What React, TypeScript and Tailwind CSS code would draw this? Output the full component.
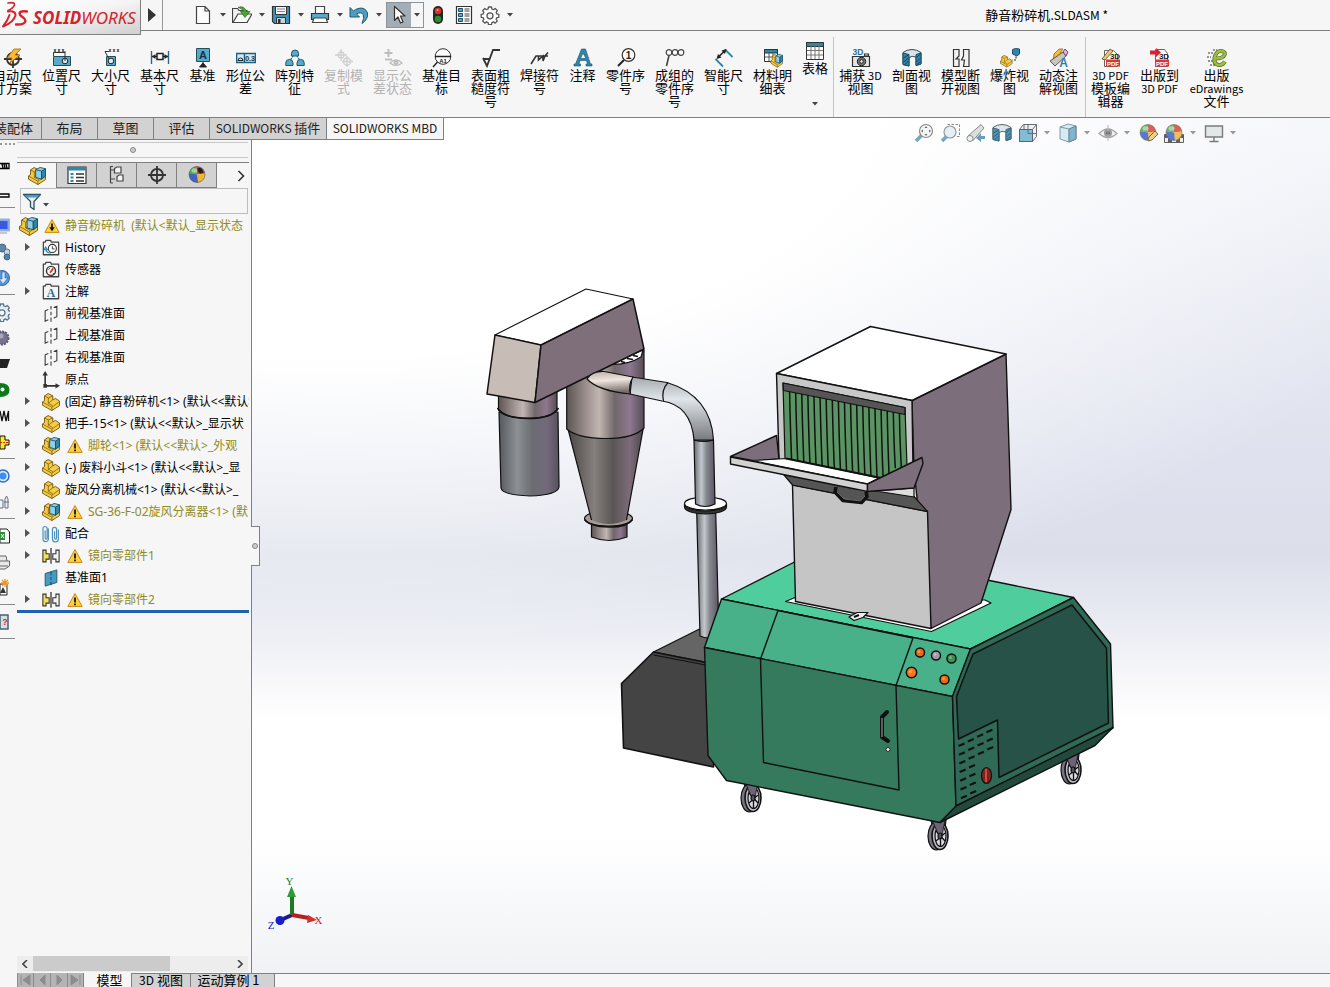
import React from "react";

type Glyph = React.ReactNode;

const INK = "#3a3a3a";
const BLUE = "#2f86ab";
const DARKBLUE = "#1d4f6b";
const LIGHT = "#8fd0e6";
const GOLD = "#f6cc45";

const blockBase = (
  <>
    <path d="M2.800 3.200 6.800.6 12 3.200v4.300L15 6l4.500 3v5L11 19.500.5 13.500V10l2.300-1.500Z" fill={GOLD} stroke="#6d5310" strokeLinejoin="round" />
    <path d="M.5 10 11 15.800l8.500-6.300M11 15.800v3.700M2.800 3.200 7 5.500l5-2.300M7 5.500v6l5 2.500M7 11.500l5-4" fill="none" stroke="#6d5310" strokeWidth=".8" />
  </>
);

const partShape = blockBase;

const assemblyShape = (
  <>
    {blockBase}
    <path d="m8.500 3 5-2.500 6 1.500v8L15 13.500l-6.500-2Z" fill={LIGHT} stroke={DARKBLUE} strokeLinejoin="round" />
    <path d="m15 4.500 4.500-2.500v8L15 13.500Z" fill={BLUE} stroke={DARKBLUE} strokeLinejoin="round" />
    <path d="m8.500 3 6.500 1.500v9" fill="none" stroke={DARKBLUE} />
  </>
);

const folderShape = (
  <path d="M1.500 17.500v-14h2l1-2h5l1 2h8v14Z" fill="#f4f4f4" stroke="#444" strokeWidth="1.400" strokeLinejoin="round" />
);

const planeShape = (
  <path d="M7 5 3.500 6.500V18L7 16.500M13 2.800l3.500-1.300V13L13 14.500M10 1v4m0 2.500v4m0 2.500v4.500" fill="none" stroke={INK} strokeWidth="1.200" />
);

const ball = (
  <>
    <path d="M10 9.500 2.200 8A8 8 0 0 1 9 1.500Z" fill="#4fae49" />
    <path d="M10 9.500 9 1.500a8 8 0 0 1 9 7Z" fill="#d9463c" />
    <path d="M10 9.500 18 8.500a8 8 0 0 1-7 9Z" fill="#f0b732" />
    <path d="M10 9.500 11 17.500A8 8 0 0 1 2.200 8Z" fill="#3f63c4" />
    <circle cx="10" cy="9.500" r="8" fill="none" stroke="#555" strokeWidth=".6" />
    <ellipse cx="7.500" cy="5.500" rx="3" ry="2.200" fill="#fff" opacity=".45" />
  </>
);

const gearShape = (color: string, fill: string) => (
  <>
    <path
      d="M8.500 2h3l.4 2 1.600.7 1.700-1.200 2.100 2.100-1.200 1.700.7 1.600 2 .4v3l-2 .4-.7 1.600 1.200 1.700-2.100 2.100-1.700-1.200-1.600.7-.4 2h-3l-.4-2-1.600-.7-1.700 1.200-2.100-2.100 1.200-1.700-.7-1.600-2-.4v-3l2-.4.7-1.600-1.200-1.700 2.100-2.100 1.700 1.200 1.600-.7Z"
      fill={fill}
      stroke={color}
      strokeWidth="1.300"
      strokeLinejoin="round"
    />
    <circle cx="10" cy="10.800" r="3" fill="#f6f6f6" stroke={color} strokeWidth="1.300" />
  </>
);

const sectionShape = (
  <>
    <path d="M1 4.500q4-3 9-3t9 3V16l-5 1.500V9q-4-1.500-7 .5v8.500L1 16.500Z" fill="#d6e6ec" stroke="#444" strokeLinejoin="round" />
    <path d="m1 5 6 1.500V18l-6-1.500ZM19 5l-5 1.500V17.500l5-1.500Z" fill={BLUE} stroke={DARKBLUE} />
    <path d="m1.500 10 5-3m-5 7 5-4m-4 7 4-4M14.500 9.500 18.500 6m-4 8 4-4m-3.500 6.500 3.500-3" stroke="#17394d" strokeWidth=".9" />
  </>
);

const miniText = (x: number, y: number, s: number, t: string, fill: string, anchor: "start" | "middle" = "middle") => (
  <text x={x} y={y} fontSize={s} fill={fill} textAnchor={anchor} fontWeight="700" className="font-['Liberation_Sans',sans-serif]">
    {t}
  </text>
);

const glyphs: Record<string, Glyph> = {
  autoDim: (
    <>
      <circle cx="10" cy="11" r="6" fill="none" stroke="#333" strokeWidth="1.800" />
      <path d="M10 3v17M1 11h18" stroke="#333" strokeWidth="1.800" />
      <path d="M11 1 4 10h5l-2 5 10-8h-5l6-6Z" fill="#ffb92e" stroke="#a2630c" strokeWidth=".8" />
    </>
  ),
  location: (
    <>
      <path d="M1.500 8.500h17v9h-17Z" fill="#58aac8" stroke="#244e60" />
      <circle cx="13" cy="13" r="2.800" fill="#d8eef5" stroke="#222" />
      <path d="M13 13V3M1.500 8V4.500H13" stroke="#333" fill="none" />
      <path d="m2 1 2 3m0-3L2 4m4-3 2 3m0-3L6 4m4-3 2 3m0-3-2 3" stroke="#222" strokeWidth=".8" />
    </>
  ),
  size: (
    <>
      <path d="M5.500 8.500h9v9h-9Z" fill="#58aac8" stroke="#244e60" />
      <circle cx="10" cy="13" r="2.800" fill="#d8eef5" stroke="#222" />
      <path d="M8 11 4 3.500h4" stroke="#333" fill="none" />
      <path d="m8 1 2 3m0-3L8 4m4-3 2 3m0-3-2 3m4-3 2 3m0-3-2 3" stroke="#222" strokeWidth=".8" />
    </>
  ),
  basic: (
    <>
      <path d="M1.500 3v13M18.500 3v13" stroke="#2a6a86" strokeWidth="1.400" />
      <path d="M2 8.500h5m6 0h5M7 5.500h6v6H7Z" fill="none" stroke="#222" strokeWidth="1.500" />
      <path d="m2 8.500 3.500-2.500v5ZM18 8.500 14.500 6v5Z" fill="#222" />
    </>
  ),
  datum: (
    <>
      <path d="M3.500.500h13v13h-13Z" fill="#58aac8" stroke="#244e60" />
      {miniText(10, 11, 11, "A", "#16323f")}
      <path d="M10 14v3M6.500 19h7L10 15Z" fill="#222" stroke="#222" />
    </>
  ),
  geoTol: (
    <>
      <path d="M.5 5.500h19v9H.5Z" fill="#cfe9f2" stroke="#1d5f7d" strokeWidth="1.600" />
      <path d="M8.500 5v10" stroke="#1d5f7d" strokeWidth="1.400" />
      <path d="M2 12.500h5a2.500 2.500 0 1 0-5 0Z" fill="none" stroke="#222" />
      {miniText(14, 13, 7, "0.3", "#16323f")}
    </>
  ),
  pattern: (
    <g fill="#58aac8" stroke="#1f5873">
      <path d="M6.500 8V5.500a3.500 3.500 0 0 1 7 0V8ZM.8 17.500V15a3.600 3.600 0 0 1 7.200 0v2.500ZM12 17.500V15a3.600 3.600 0 0 1 7.200 0v2.500Z" />
      <path d="m8 8-2.500 4M12 8l2.500 4" strokeWidth="1.200" strokeDasharray="1.500 1" />
    </g>
  ),
  copy: (
    <g fill="none" stroke="#cfcfcf" strokeWidth="1.300">
      <circle cx="7" cy="7" r="3" />
      <path d="M7 1v12M1 7h12M13 8v11M8 13.500h11" />
      <circle cx="13" cy="13.500" r="3.500" />
    </g>
  ),
  tolStatus: (
    <g fill="none" stroke="#bdbdbd" strokeWidth="2">
      <path d="M5.500 1v8M1.500 5h8M2 11.500h7" />
      <path d="M7 15q6-6 12 0-6 5-12 0Z" strokeWidth="1.200" />
      <circle cx="13" cy="14.500" r="1.500" />
    </g>
  ),
  datumTarget: (
    <>
      <circle cx="11" cy="8.500" r="7.800" fill="#fff" stroke="#333" />
      <path d="M3 8.500h16M5.500 14 1 19" stroke="#222" strokeWidth="1.400" />
      {miniText(11, 14.500, 6, "A1", "#222")}
    </>
  ),
  roughness: <path d="m2 10 4 8L12 2h7M2.500 11h6" fill="none" stroke="#333" strokeWidth="1.800" />,
  weld: <path d="m1 16 5-8h12M8.500 8v4L13 8v5l2-5 3-3.500" fill="none" stroke="#333" strokeWidth="1.600" />,
  note: (
    <path
      d="M8.500 1h4l5 15H19v2h-6v-2h1.500l-1-3.500H7L6 16h1.500v2H1v-2h1.500Zm1.500 4L7.500 10.500H13Z"
      fill={BLUE}
      stroke={DARKBLUE}
      strokeWidth=".6"
      fillRule="evenodd"
    />
  ),
  balloon: (
    <>
      <circle cx="12.500" cy="7" r="6.300" fill="#fff" stroke="#333" strokeWidth="1.200" />
      <path d="M8 12 2 18" stroke="#222" strokeWidth="2" />
      {miniText(12.500, 10.500, 10, "1", "#222")}
    </>
  ),
  stacked: (
    <g fill="#fff" stroke="#444" strokeWidth="1.200">
      <circle cx="4" cy="4.500" r="2.800" />
      <circle cx="10" cy="4.500" r="2.800" />
      <circle cx="16" cy="4.500" r="2.800" />
      <path d="M4 7.500 1.500 18" strokeWidth="1.600" />
    </g>
  ),
  smartDim: (
    <>
      <path d="M1.500 11 9 18.500M11 1.500 18.500 9" stroke={BLUE} strokeWidth="1.800" />
      <path d="m4 9.500 7-7" stroke="#222" strokeWidth="1.600" />
      <path d="M2.500 11 4 6l3.500 3.500ZM12.500 1 11 6 7.500 2.500Z" fill="#222" />
    </>
  ),
  bom: (
    <>
      <path d="M1.500 1.500h13v12h-13Z" fill="#fff" stroke="#333" />
      <path d="M1.500 1.500h13v3.500h-13Z" fill={BLUE} stroke="#333" />
      <path d="M2 9h12M6 5v8m4-8v8" stroke="#555" />
      <g transform="translate(7.500 6) scale(.62 .68)">{assemblyShape}</g>
    </>
  ),
  table: (
    <>
      <path d="M1.500 1.500h17v17h-17Z" fill="#fff" stroke="#333" />
      <path d="M1.500 1.500h17v4h-17Z" fill={BLUE} stroke="#333" />
      <path d="M2 9.500h16M2 14h16M6 5v13m4-13v13m4-13v13" stroke="#777" />
    </>
  ),
  capture: (
    <>
      {miniText(7, 7, 8.500, "3D", "#2f6f9b")}
      <path d="M1.500 8.500h17v10h-17ZM13.500 6h4v2h-4Z" fill="#e4e4e4" stroke="#333" strokeWidth="1.200" />
      <circle cx="10.500" cy="13.500" r="4.200" fill="#777" stroke="#222" />
      <circle cx="10.500" cy="13.500" r="1.800" fill="#eee" stroke="#222" />
    </>
  ),
  section: sectionShape,
  breakView: <path d="M2.500 1.500H8V8l-3 3h3v7.500H2.500ZM18 1.500h-5.500V8l-2 4h3l-1 6.500H18Z" fill="#f2f2f2" stroke="#333" strokeWidth="1.200" />,
  explode: (
    <>
      <g transform="translate(0 7) scale(.62)">{blockBase}</g>
      <path d="m12.500 1.500 3-1 4 .5v5L17 8l-4.500-2Z" fill={BLUE} stroke={DARKBLUE} />
      <path d="M16 8.500v3.500h-4" stroke="#222" strokeDasharray="2 1.500" fill="none" />
    </>
  ),
  dynamic: (
    <>
      <path d="m5 6 5-5h4l-3 4h3L4 13Z" fill="#ffb92e" stroke="#a2630c" strokeWidth=".8" />
      <path d="M1 13 14 4l3 4L6 18Z" fill="#c9c6c2" stroke="#555" />
      <path d="m14 4 2-3 3 3-2 4Z" fill="#d9b6e0" stroke="#6a4a74" />
      {miniText(14.500, 19, 12, "A", "#2f7fa5")}
    </>
  ),
  pdfEdit: (
    <>
      <path d="M3.500 2.500h9l4 4v12h-13Z" fill="#fff" stroke="#666" />
      {miniText(14, 10.500, 8, "3D", "#222")}
      <path d="M5 11.500h14v7H5Z" fill="#e0342d" />
      {miniText(12, 17.500, 6, "PDF", "#fff")}
      <path d="m1 11 8-10 3 2-8 9Z" fill="#f0c878" stroke="#5d4618" strokeWidth=".8" />
    </>
  ),
  pdfOut: (
    <>
      <path d="M5.500 1.500h9l3 4v13h-12Z" fill="#fff" stroke="#666" />
      {miniText(14, 10.500, 8, "3D", "#222")}
      <path d="M5 11.500h14v7H5Z" fill="#e0342d" />
      {miniText(12, 17.500, 6, "PDF", "#fff")}
      <path d="M0 2.500h6V0l5 4.500L6 9V6.500H0Z" fill="#d8232f" />
    </>
  ),
  eDrawings: (
    <>
      <path d="M1 5h5M0 9h4M1 13h5M3 17h6M6 2h4" stroke="#333" strokeDasharray="2 1" />
      <path d="M18 13.500q-2.500 4-6.500 3.500Q6.500 16 7.500 10 9 3 14 3q5 .5 3.500 4T8 10.500" fill="none" stroke="#5b7423" strokeWidth="4" />
      <path d="M18 13.500q-2.500 4-6.500 3.500Q6.500 16 7.500 10 9 3 14 3q5 .5 3.500 4T8 10.500" fill="none" stroke="#9dbd45" strokeWidth="2.400" />
    </>
  ),
  newDoc: <path d="M3.500 1.500h8.500l4.500 4.500v12.500h-13ZM12 1.500V6h4.500" fill="#fdfdfd" stroke="#444" strokeWidth="1.200" />,
  open: (
    <>
      <path d="M.5 17.500V3.500h5l1.500 2h8v12Z" fill="#f1f1f1" stroke="#444" strokeWidth="1.200" />
      <path d="M1 17.500 6 9h14l-5 8.500Z" fill="#fff" stroke="#444" strokeWidth="1.200" />
      <path d="M6 2.500q6-2.500 8.500 4H18l-5 6-4.500-6h3Q10 3 6 2.500Z" fill="#4aa832" stroke="#2a6b1b" strokeWidth=".7" />
    </>
  ),
  save: (
    <>
      <path d="M1.500 1.500h17v17H3.500l-2-2Z" fill="#3b93ba" stroke="#333" strokeWidth="1.200" />
      <path d="M4.500 1.500h11v8h-11Z" fill="#f4f4f4" stroke="#333" />
      <path d="M6 4h8M6 6.500h8" stroke="#888" />
      <path d="M5.500 12.500h9v6h-9Z" fill="#c9d3d8" stroke="#333" />
      <path d="M7 14h2.500v4H7Z" fill="#333" />
    </>
  ),
  print: (
    <>
      <path d="M5.500 1.500h9V9h-9Z" fill="#fff" stroke="#444" strokeWidth="1.200" />
      <path d="M1.500 8.500h17v6h-17Z" fill="#58aac8" stroke="#333" strokeWidth="1.200" />
      <path d="m4 13-1.500 4.500h15L16 13Z" fill="#fff" stroke="#444" strokeWidth="1.200" />
    </>
  ),
  undo: (
    <path
      d="M1 2.500V12h9.500L7.500 9Q12 6.500 14.200 9.500 15.500 13 13 18.500 19.500 14 18.500 8 16 1.500 9 3.500 6 4.500 4.500 6Z"
      fill="#4c9fc2"
      stroke="#235a74"
      strokeLinejoin="round"
    />
  ),
  cursor: <path d="M5.500 1.500v14l3.500-3.500 2.500 6 2.500-1-2.500-6h4.500Z" fill="#fff" stroke="#333" strokeWidth="1.200" strokeLinejoin="round" />,
  light: (
    <>
      <rect x="5" y="1" width="10" height="18" rx="5" fill="#26261f" />
      <circle cx="10" cy="6" r="3.300" fill="#d8322a" />
      <circle cx="10" cy="14" r="3.300" fill="#2f8a35" />
      <circle cx="9.500" cy="5" r="1" fill="#ffa69b" />
    </>
  ),
  props: (
    <>
      <path d="M2.500 1.500h15v17h-15Z" fill="#fff" stroke="#333" strokeWidth="1.200" />
      <path d="M4.500 3.500h4v3h-4Zm0 5h4v3h-4Zm0 5h4v3h-4Z" fill="#58aac8" stroke="#1d4f6b" />
      <path d="M10.500 4h5m-5 2h5m-5 3h5m-5 2h5m-5 3h5m-5 2h5" stroke="#444" />
    </>
  ),
  gear: gearShape("#555", "#fff"),
  part: partShape,
  assembly: assemblyShape,
  history: (
    <>
      {folderShape}
      <circle cx="11.500" cy="10.500" r="4.500" fill="#fff" stroke="#333" strokeWidth="1.200" />
      <path d="M11.500 8v3h2.500" stroke="#333" fill="none" />
      <path d="M4 11q1 5 6 4.500M4 9l-1.500 3H6Z" stroke={BLUE} fill="none" strokeWidth="1.200" />
    </>
  ),
  sensor: (
    <>
      {folderShape}
      <circle cx="10" cy="11" r="5" fill="#fff" stroke="#333" strokeWidth="1.600" />
      <path d="m9 13 3.500-5" stroke="#d8322a" strokeWidth="2" />
      <path d="M7 9.500 9 8m3 6h2" stroke="#333" />
    </>
  ),
  annot: (
    <>
      {folderShape}
      <text x="10" y="16" fontSize="13" textAnchor="middle" fill="#2a6f8f" fontWeight="700" className="font-['Liberation_Serif',serif]">A</text>
    </>
  ),
  plane: planeShape,
  origin: (
    <>
      <path d="M3.500 3v13.500H17" fill="none" stroke="#333" strokeWidth="1.800" />
      <path d="M3.500 0 6.500 5h-6ZM20 16.500l-5-3v6ZM1.500 14.500h4v4h-4Z" fill="#333" />
    </>
  ),
  mates: (
    <g fill="none" stroke="#4d91b8" strokeWidth="1.300">
      <path d="M3.500 6v8.500a1 1 0 0 0 2.200 0V4a2.300 2.300 0 0 0-4.600 0v11.500a3 3 0 0 0 6 0V4" />
      <path d="M14 7v7.500a1 1 0 0 0 2.200 0V5a2.300 2.300 0 0 0-4.600 0v10.500a3 3 0 0 0 6.600 0V5" />
    </g>
  ),
  mirror: (
    <>
      <path d="M1 3.500h3.500v4h3.500v6H4.500v3H1Z" fill="#f5e05a" stroke="#333" strokeWidth="1.200" />
      <path d="M19 3.500h-3.500v4H12v6h3.500v3H19Z" fill="#f4f4f4" stroke="#333" strokeWidth="1.200" />
      <path d="M10 1v17.500" stroke="#222" strokeWidth="1.300" />
    </>
  ),
  refPlane: (
    <>
      <path d="m3.500 5 13-4v14l-13 4Z" fill="#4a9abf" stroke="#24566e" />
      <path d="M10 3v4m0 2v3m0 2v4" stroke="#153a4c" />
    </>
  ),
  warn: (
    <>
      <path d="M10 2 19 18H1Z" fill="#fcd13b" stroke="#c98510" strokeWidth="1.200" strokeLinejoin="round" />
      <path d="M10 7v6m0 1.500v2" stroke="#111" strokeWidth="2.200" />
    </>
  ),
  warnDown: (
    <>
      <path d="M10 2 19 18H1Z" fill="#fcd13b" stroke="#c98510" strokeWidth="1.200" strokeLinejoin="round" />
      <path d="M10 7v6" stroke="#111" strokeWidth="2.200" />
      <path d="M6.500 11.500h7L10 16.500Z" fill="#111" />
    </>
  ),
  propList: (
    <>
      <path d="M1 2h18v16.500H1Z" fill="#fff" stroke="#333" strokeWidth="1.200" />
      <path d="M1 2h18v3.500H1Z" fill={BLUE} />
      <path d="M3.500 8h3v2h-3Zm0 3.500h3v2h-3Zm0 3.500h3v2h-3Z" fill={BLUE} />
      <path d="M9 9h8m-8 3.500h8M9 16h8" stroke="#333" strokeWidth="1.300" />
    </>
  ),
  config: (
    <g fill="#f4f4f4" stroke="#444" strokeWidth="1.200">
      <path d="M3.500 1v17M3.500 5H8m-4.500 9H8M3.500 1.500H6M3.500 18H6" />
      <path d="M7.500 3.500 10 2h4v6H7.500ZM10 11.500l2-1.500h4v6h-6Z" />
    </g>
  ),
  target: (
    <g fill="none" stroke="#333" strokeWidth="1.800">
      <circle cx="10" cy="10" r="6" />
      <path d="M10 1v18M1 10h18" />
    </g>
  ),
  appearance: (
    <>
      {ball}
      <path d="M10.500 3q5-1 6 5l-3.500.5Q10 7 10.500 3Z" fill="#222" />
    </>
  ),
  filter: (
    <>
      <path d="M1.500 3.500h17L12 10.500v8L8.500 16v-5.500Z" fill="#e8eef1" stroke="#2e5163" strokeWidth="1.300" strokeLinejoin="round" />
      <path d="M2.500 4h15l-2 2.500h-11Z" fill="#4a9abf" />
    </>
  ),
  zoomFit: (
    <>
      <path d="m8 12-6 6" stroke="#5e98b5" strokeWidth="3.500" />
      <circle cx="12" cy="8" r="6.500" fill="#f2f5f7" stroke="#777" strokeWidth="1.200" />
      <path d="m12 3 1.500 2h-3Zm0 10-1.500-2h3ZM7 8l2-1.500v3Zm10 0-2 1.500v-3Z" fill="#555" />
    </>
  ),
  zoomArea: (
    <>
      <path d="M7.500 1.500h12v12h-3" fill="none" stroke="#777" strokeDasharray="2.500 1.500" />
      <path d="m7 13-5 5" stroke="#5e98b5" strokeWidth="3.500" />
      <circle cx="10" cy="9" r="6" fill="#dfeef4" stroke="#888" strokeWidth="1.200" />
    </>
  ),
  prevView: (
    <>
      <path d="M2 13 15 1.500l3 3.500L6.500 18Z" fill="#d9d9d9" stroke="#777" />
      <circle cx="4" cy="15.500" r="3" fill="#eee" stroke="#777" />
      <path d="M19 13h-4v-3l-5 5 5 4v-3h4Z" fill="#4b8fb0" />
    </>
  ),
  orient: (
    <>
      <path d="m1.500 6.500 4-5h13v12l-4 5h-13Z" fill="#e9f1f5" stroke="#555" />
      <path d="M1.500 6.500h13v12h-13Z" fill="#6fb2cf" stroke="#446" />
      <path d="m14.500 6.500 4-5M10 1.500v9h8.500M6 6V1.500" fill="none" stroke="#555" />
    </>
  ),
  cube: (
    <>
      <path d="m2 4 8-3 8 2v13l-7 3-9-3Z" fill="#cfe9f2" stroke="#6b8996" />
      <path d="m11 6 7-3v13l-7 3Z" fill="#69abc8" stroke="#567" />
      <path d="m2 4 9 2v13" fill="none" stroke="#6b8996" />
    </>
  ),
  eye: (
    <>
      <path d="M1 10.500q9-9 18 0-9 8-18 0Z" fill="#eee" stroke="#999" strokeWidth="1.300" />
      <circle cx="10" cy="10" r="4" fill="#8b8b8b" />
      <circle cx="10" cy="10" r="1.800" fill="#333" />
      <path d="M10 2v16" stroke="#aaa" />
    </>
  ),
  ballEdit: (
    <>
      {ball}
      <path d="m10 18 1-4 6-6 3 3-6 6Z" fill="#f0c878" stroke="#6d5310" />
    </>
  ),
  scene: (
    <>
      <path d="M.5 11.500h19v8H.5Z" fill="#eee" stroke="#444" />
      <path d="M1 12h3v3H1Zm14 0h4v3h-4ZM4 15h4v4H4Zm8 0h4v4h-4Z" fill="#444" />
      {ball}
    </>
  ),
  monitor: (
    <>
      <path d="M1.500 3h17v11h-17Z" fill="#dfe4e7" stroke="#666" strokeWidth="1.400" />
      <path d="M10 14v4M5.500 18.500h9" stroke="#666" strokeWidth="1.500" />
    </>
  ),
};

const stripGlyphs: Record<string, Glyph> = {
  screw: <path d="M0 7.500h9v5H0M2 8l1 4m1-4 1 4m1-4 1 4" fill="none" stroke="#000" strokeWidth="1.300" />,
  tube: <path d="M0 8h9v3H0" fill="none" stroke="#000" strokeWidth="1.300" />,
  screen: (
    <>
      <path d="M0 3h9.500v12H0Z" fill="#8fa8f5" stroke="#9fb2c8" />
      <path d="M0 5h7.500v8H0Z" fill="#355be0" />
      <path d="M0 17h7" stroke="#999" />
    </>
  ),
  data: (
    <g stroke="#456" strokeWidth=".8">
      <circle cx="2" cy="6" r="4" fill="#5d86ad" />
      <circle cx="7" cy="10" r="3" fill="#bcd6ea" />
      <circle cx="7" cy="15" r="3" fill="#4b83b5" />
    </g>
  ),
  globe: (
    <>
      <circle cx="2" cy="10" r="7.500" fill="#5d95d8" stroke="#3566a4" />
      <path d="M2 4h3v6h3l-5 6-4-5h3Z" fill="#cfe8f8" stroke="#2b62b0" strokeWidth=".6" />
    </>
  ),
  gear: <g transform="translate(-8 0)">{gearShape("#5d748c", "#e6eef5")}</g>,
  cog: (
    <g>
      <circle cx="2" cy="10" r="6.500" fill="#77738f" stroke="#5a5672" strokeDasharray="2 1" strokeWidth="2" />
      <circle cx="1" cy="8" r="2.500" fill="#aaa7bd" />
    </g>
  ),
  black: <path d="M0 5h10l-3 9H0Z" fill="#222" />,
  clip: (
    <>
      <path d="M0 3q9.500 0 9.500 7T0 17Z" fill="#0b7a1b" />
      <circle cx="2.500" cy="9.500" r="2" fill="#fff" />
    </>
  ),
  spring: <path d="m0 5 2 10L4 5l2 10L8.500 5v10" fill="none" stroke="#111" strokeWidth="1.300" />,
  yellow: (
    <>
      <path d="M0 4h5v4h4v5H5v4H0Z" fill="#ffe92b" stroke="#111" />
      <path d="M0 10.500h9" stroke="#e02020" strokeDasharray="2 1" />
    </>
  ),
  disc: (
    <>
      <circle cx="3" cy="10" r="6" fill="#dceafd" stroke="#2d6fc4" strokeWidth="1.500" />
      <circle cx="3" cy="10" r="3.500" fill="#3f8df0" />
    </>
  ),
  stamp: <path d="M0 8h3v8H0M5 16V7l1.500-3L8 7v9ZM4 10h5" fill="#eef2f6" stroke="#64707c" />,
  sheet: (
    <>
      <path d="M0 3h7l2.500 3v11H0Z" fill="#fff" stroke="#222" />
      <path d="M0 6h5v8H0Z" fill="#2e8b3a" />
      <path d="m1 8 3 4m0-4-3 4" stroke="#fff" />
    </>
  ),
  printer: <path d="M0 4h6l1 5h2.500v5L5 17H0M0 9h7M0 14h8" fill="#e8e8e8" stroke="#666" />,
  picture: (
    <>
      <path d="M0 6h7v11H0Z" fill="#fff" stroke="#222" />
      <path d="M0 15 3 9l3 6Z" fill="#333" />
      <path d="M5 1v8M1 5h8M2 2l6 6m0-6L2 8" stroke="#f0962a" strokeWidth="1.300" />
    </>
  ),
  help: (
    <>
      <path d="M0 3h8v14H0Z" fill="#cfe0ea" stroke="#4a6172" strokeWidth="1.500" />
      {miniText(5, 13, 9, "?", "#d02a2a")}
    </>
  ),
};

function Icon({ name, className = "h-5 w-5" }: { name: string; className?: string }) {
  return (
    <svg viewBox="0 0 20 20" className={`block shrink-0 ${className}`} aria-hidden="true">
      {glyphs[name]}
    </svg>
  );
}

function Caret({ className = "text-[#444]" }: { className?: string }) {
  return (
    <svg viewBox="0 0 6 4" className={`block h-1 w-1.5 ${className}`} aria-hidden="true">
      <path d="M0 0h6L3 3.500Z" fill="currentColor" />
    </svg>
  );
}

/* Latin runs are set a little smaller than the Chinese characters beside them. */
function Mixed({ text, latin = "text-[12px]" }: { text: string; latin?: string }) {
  return (
    <>
      {text.split(/([\x21-\x7e][\x20-\x7e]*)/).map((part, i) =>
        i % 2 ? (
          <span key={i} className={latin}>
            {part}
          </span>
        ) : (
          part
        ),
      )}
    </>
  );
}

function QuickButton({ icon, label, menu = true }: { icon: string; label: string; menu?: boolean }) {
  return (
    <div className="flex items-center">
      <button aria-label={label}>
        <Icon name={icon} />
      </button>
      {menu && (
        <button aria-label={`${label} 选项`} className="flex h-5 w-[19px] items-center justify-center">
          <Caret />
        </button>
      )}
    </div>
  );
}

function TitleBar() {
  return (
    <header className="relative z-10 flex h-[31px] shrink-0 items-center border-b border-[#808080]">
      <div className="flex h-[35px] w-[141px] shrink-0 items-center gap-[5px] self-start border-r border-b border-[#808080] bg-linear-to-br from-white via-[#f4f4f4] to-[#cfcfcf]">
        <svg viewBox="0 0 28 28" className="-mt-1 h-7 w-7 shrink-0" aria-hidden="true">
          <g fill="none" stroke="#d4242b" strokeLinecap="round" strokeLinejoin="round">
            <path d="M8 2Q15 .8 14.500 4 13 7.500 8 9.500" strokeWidth="1.700" />
            <path d="M8 10.500Q16 9.500 15.500 14.500 13.500 21.500 3 25.500 7.500 20 9.500 14" strokeWidth="2" />
            <path d="M27 10.500q-7-1-7.500 2 0 1.500 3 3.500t3 4Q24.500 24 16 23.500" strokeWidth="2.400" />
          </g>
        </svg>
        <span className="pt-[2px] text-[17px] leading-5 text-[#d4242b] italic font-['Noto_Sans',sans-serif]">
          <b className="font-bold">SOLID</b>WORKS
        </span>
      </div>
      <button aria-label="展开菜单" className="flex h-full w-[22px] shrink-0 items-center justify-center border-r border-[#9a9a9a]">
        <svg viewBox="0 0 8 14" className="h-[14px] w-2" aria-hidden="true">
          <path d="m0 0 8 7-8 7Z" fill="#333" />
        </svg>
      </button>
      <div className="ml-[30px] flex items-center">
        <QuickButton icon="newDoc" label="新建" />
        <QuickButton icon="open" label="打开" />
        <QuickButton icon="save" label="保存" />
        <QuickButton icon="print" label="打印" />
        <QuickButton icon="undo" label="撤销" />
        <div className="-ml-0.5 mr-1 flex h-[26px] border border-[#8b949b]">
          <button aria-label="选择" className="flex w-6 items-center justify-center bg-[#a3adb5]">
            <Icon name="cursor" />
          </button>
          <button aria-label="选择 选项" className="flex w-3 items-center justify-center bg-[#f6f6f6]">
            <Caret />
          </button>
        </div>
        <div className="flex items-center gap-[6px]">
          <QuickButton icon="light" label="重建模型" menu={false} />
          <QuickButton icon="props" label="文件属性" menu={false} />
          <QuickButton icon="gear" label="选项" />
        </div>
      </div>
      <h1 className="mr-[222px] ml-auto text-[13px] leading-4 whitespace-nowrap text-black">
        <Mixed text="静音粉碎机.SLDASM *" />
      </h1>
    </header>
  );
}

type Tool = { icon: string; lines: string[]; width?: string; disabled?: boolean };

const dimensionTools: Tool[] = [
  { icon: "autoDim", lines: ["自动尺", "寸方案"] },
  { icon: "location", lines: ["位置尺", "寸"] },
  { icon: "size", lines: ["大小尺", "寸"] },
  { icon: "basic", lines: ["基本尺", "寸"] },
  { icon: "datum", lines: ["基准"], width: "w-[37px]" },
  { icon: "geoTol", lines: ["形位公", "差"] },
  { icon: "pattern", lines: ["阵列特", "征"] },
  { icon: "copy", lines: ["复制模", "式"], disabled: true },
  { icon: "tolStatus", lines: ["显示公", "差状态"], disabled: true },
  { icon: "datumTarget", lines: ["基准目", "标"] },
  { icon: "roughness", lines: ["表面粗", "糙度符", "号"] },
  { icon: "weld", lines: ["焊接符", "号"] },
  { icon: "note", lines: ["注释"], width: "w-[37px]" },
  { icon: "balloon", lines: ["零件序", "号"] },
  { icon: "stacked", lines: ["成组的", "零件序", "号"] },
  { icon: "smartDim", lines: ["智能尺", "寸"] },
  { icon: "bom", lines: ["材料明", "细表"] },
];

const viewTools: Tool[] = [
  { icon: "capture", lines: ["捕获 3D", "视图"], width: "w-[53px]" },
  { icon: "section", lines: ["剖面视", "图"] },
  { icon: "breakView", lines: ["模型断", "开视图"] },
  { icon: "explode", lines: ["爆炸视", "图"] },
  { icon: "dynamic", lines: ["动态注", "解视图"] },
];

const publishTools: Tool[] = [
  { icon: "pdfEdit", lines: ["3D PDF", "模板编", "辑器"] },
  { icon: "pdfOut", lines: ["出版到", "3D PDF"] },
  { icon: "eDrawings", lines: ["出版", "eDrawings", "文件"], width: "w-[65px]" },
];

function RibbonButton({ icon, lines, width = "w-[49px]", disabled }: Tool) {
  return (
    <button disabled={disabled} className={`flex shrink-0 flex-col items-center pt-[17px] ${width} ${disabled ? "text-[#b4b4b4]" : "text-black"}`}>
      <Icon name={icon} />
      {lines.map((line) => (
        <span key={line} className="h-[13px] text-[13px] leading-[13px] whitespace-nowrap">
          <Mixed text={line} latin="text-[11px]" />
        </span>
      ))}
    </button>
  );
}

function Ribbon() {
  return (
    <div className="flex h-[86px] shrink-0 overflow-hidden">
      <div className="-ml-3 flex">
        {dimensionTools.map((t) => (
          <RibbonButton key={t.icon} {...t} />
        ))}
        <button className="flex w-[36px] flex-col items-center pt-[10px] pb-[11px] text-black">
          <Icon name="table" />
          <span className="text-[13px] leading-[13px]">表格</span>
          <span className="mt-auto">
            <Caret />
          </span>
        </button>
      </div>
      <div className="mt-[6px] w-px bg-[#c4c4c4]" />
      <div className="flex">
        {viewTools.map((t) => (
          <RibbonButton key={t.icon} {...t} />
        ))}
      </div>
      <div className="mt-[6px] ml-[2px] w-px bg-[#c4c4c4]" />
      <div className="flex">
        {publishTools.map((t) => (
          <RibbonButton key={t.icon} {...t} />
        ))}
      </div>
    </div>
  );
}

const commandTabs = [
  { label: "装配体", width: "w-[42px]" },
  { label: "布局", width: "w-14" },
  { label: "草图", width: "w-14" },
  { label: "评估", width: "w-14" },
  { label: "SOLIDWORKS 插件", width: "w-[117px]" },
  { label: "SOLIDWORKS MBD", width: "w-[117px]", active: true },
];

function CommandTabs() {
  return (
    <nav className="flex h-[22px] w-fit border-b border-[#808080] bg-[#f6f6f6]">
      {commandTabs.map((t, i) => (
        <button
          key={t.label}
          className={`flex shrink-0 items-center overflow-hidden border-r border-[#808080] pb-[2px] text-[13px] leading-4 whitespace-nowrap text-[#222] ${t.width} ${
            i === 0 ? "justify-end pr-2" : "justify-center"
          } ${t.active ? "bg-[#f6f6f6]" : "bg-[#d2d2d2]"}`}
        >
          <span className="shrink-0">
            <Mixed text={t.label} />
          </span>
        </button>
      ))}
    </nav>
  );
}

const hudTools: { icon: string; label: string; menu?: boolean }[] = [
  { icon: "zoomFit", label: "整屏显示全图" },
  { icon: "zoomArea", label: "局部放大" },
  { icon: "prevView", label: "上一视图" },
  { icon: "section", label: "剖面视图" },
  { icon: "orient", label: "视图定向", menu: true },
  { icon: "cube", label: "显示样式", menu: true },
  { icon: "eye", label: "隐藏所有类型", menu: true },
  { icon: "ballEdit", label: "编辑外观" },
  { icon: "scene", label: "应用布景", menu: true },
  { icon: "monitor", label: "视图设置", menu: true },
];

function HeadsUpBar() {
  return (
    <div className="absolute top-1 right-[89px] flex items-center opacity-85">
      {hudTools.map((t) => (
        <React.Fragment key={t.icon}>
          <button aria-label={t.label} className="flex h-[22px] w-[26px] items-center justify-center">
            <Icon name={t.icon} />
          </button>
          {t.menu && (
            <button aria-label={`${t.label} 选项`} className="flex h-[22px] w-[14px] items-center pl-[3px]">
              <Caret className="text-[#888]" />
            </button>
          )}
        </React.Fragment>
      ))}
    </div>
  );
}

const stripItems = [
  "screen", "data", "globe", "-", "gear", "cog", "black", "clip", "spring", "yellow", "-",
  "disc", "stamp", "-", "sheet", "printer", "picture", "-", "help", "-",
];

function StripIcon({ name }: { name: string }) {
  return (
    <button aria-label={name} className="block h-5 w-[10px]">
      <svg viewBox="0 0 10 20" className="block h-5 w-[10px]" aria-hidden="true">
        {stripGlyphs[name]}
      </svg>
    </button>
  );
}

function SideStrip() {
  return (
    <div className="w-[17px] shrink-0 bg-[#f6f6f6]">
      <div className="mt-[3px] w-[15px] border-t-2 border-dotted border-[#999]" />
      <div className="mt-[11px] flex flex-col gap-[10px]">
        <StripIcon name="screw" />
        <StripIcon name="tube" />
      </div>
      <div className="mt-[1px] mb-2 w-[15px] border-t border-[#8a8a8a]" />
      <div className="flex flex-col gap-[6px]">
        {stripItems.map((n, i) =>
          n === "-" ? <div key={i} className="h-[2px] w-[15px] border-t border-[#8a8a8a]" /> : <StripIcon key={i} name={n} />,
        )}
      </div>
    </div>
  );
}

type Node = { icon: string; text: string; arrow?: boolean; warn?: boolean };

const nodes: Node[] = [
  { icon: "history", text: "History", arrow: true },
  { icon: "sensor", text: "传感器" },
  { icon: "annot", text: "注解", arrow: true },
  { icon: "plane", text: "前视基准面" },
  { icon: "plane", text: "上视基准面" },
  { icon: "plane", text: "右视基准面" },
  { icon: "origin", text: "原点" },
  { icon: "part", text: "(固定) 静音粉碎机<1> (默认<<默认>", arrow: true },
  { icon: "part", text: "把手-15<1> (默认<<默认>_显示状", arrow: true },
  { icon: "assembly", text: "脚轮<1> (默认<<默认>_外观", arrow: true, warn: true },
  { icon: "part", text: "(-) 废料小斗<1> (默认<<默认>_显", arrow: true },
  { icon: "part", text: "旋风分离机械<1> (默认<<默认>_", arrow: true },
  { icon: "assembly", text: "SG-36-F-02旋风分离器<1> (默", arrow: true, warn: true },
  { icon: "mates", text: "配合", arrow: true },
  { icon: "mirror", text: "镜向零部件1", arrow: true, warn: true },
  { icon: "refPlane", text: "基准面1" },
  { icon: "mirror", text: "镜向零部件2", arrow: true, warn: true },
];

const OLIVE = "text-[#8f8b1c]";

function FeatureTree() {
  return (
    <ul className="mr-[2px] overflow-hidden border-b-[3px] border-[#1f63b0] text-[12px] leading-5 font-['Noto_Sans','Noto_Sans_CJK_SC',sans-serif]">
      <li className={`mr-[2px] flex h-[22px] items-center overflow-hidden pt-[2px] pl-[2px] ${OLIVE}`}>
        <Icon name="assembly" className="h-[19px] w-[19px]" />
        <Icon name="warnDown" className="ml-1.5 h-4 w-4" />
        <span className="ml-[5px] whitespace-pre">静音粉碎机  (默认&lt;默认_显示状态</span>
      </li>
      {nodes.map((n) => (
        <li key={n.text} className={`flex h-[22px] items-center pt-[2px] pl-2 ${n.warn ? OLIVE : "text-black"}`}>
          <span className="h-[11px] w-[17px] shrink-0">
            {n.arrow && (
              <svg viewBox="0 0 5 8" className="h-2 w-[5px]" aria-hidden="true">
                <path d="m0 0 5 4-5 4Z" fill="#555" />
              </svg>
            )}
          </span>
          <Icon name={n.icon} className="h-[18px] w-[18px]" />
          {n.warn && <Icon name="warn" className="ml-[7px] h-4 w-4" />}
          <span className="ml-[5px] whitespace-nowrap">{n.text}</span>
        </li>
      ))}
    </ul>
  );
}

function FeaturePanel() {
  return (
    <aside className="relative flex w-[235px] shrink-0 flex-col border-r border-[#808080] bg-[#f6f6f6]">
      <div className="mt-[2px] mr-[3px] flex h-4 items-center justify-center border-y border-[#c8c8c8]">
        <span className="h-[6px] w-[6px] rounded-full border border-[#888] bg-[#ccc]" />
      </div>
      <div className="mt-1 mr-[2px] flex h-[26px] border-t border-[#808080]">
        <button aria-label="特征树" className="flex w-[39px] items-center justify-center">
          <Icon name="assembly" className="h-[18px] w-[18px]" />
        </button>
        {["propList", "config", "target", "appearance"].map((n) => (
          <button key={n} aria-label={n} className="flex w-10 items-center justify-center border-b border-l border-[#808080] bg-[#d2d2d2]">
            <Icon name={n} />
          </button>
        ))}
        <div className="flex flex-1 items-center justify-end border-l border-[#808080] bg-[#f6f6f6] pr-1">
          <svg viewBox="0 0 8 12" className="h-3 w-2" aria-hidden="true">
            <path d="m1.500 1 5 5-5 5" fill="none" stroke="#333" strokeWidth="1.600" />
          </svg>
        </div>
      </div>
      <div className="mx-[3px] flex h-[26px] items-center border border-[#bdbdbd] pl-px">
        <button aria-label="过滤器" className="flex items-end gap-px">
          <Icon name="filter" />
          <Caret className="mb-1 text-[#444]" />
        </button>
        <input aria-label="过滤特征树" className="min-w-0 flex-1 bg-transparent text-[12px] outline-none" />
      </div>
      <FeatureTree />
      <div className="mt-auto mr-[3px] mb-px flex h-4 items-center bg-[#ededed]">
        <button aria-label="向左滚动" className="flex w-4 justify-center">
          <svg viewBox="0 0 6 8" className="h-2 w-1.5" aria-hidden="true">
            <path d="M5 0 1 4l4 4" fill="none" stroke="#444" strokeWidth="1.600" />
          </svg>
        </button>
        <div className="h-full flex-1">
          <div className="h-[15px] w-[69%] bg-[#cbcbcb]" />
        </div>
        <button aria-label="向右滚动" className="flex w-4 justify-center">
          <svg viewBox="0 0 6 8" className="h-2 w-1.5" aria-hidden="true">
            <path d="m1 0 4 4-4 4" fill="none" stroke="#444" strokeWidth="1.600" />
          </svg>
        </button>
      </div>
      <button
        aria-label="折叠面板"
        className="absolute top-[386px] -right-[9px] flex h-10 w-[9px] items-center justify-center border border-l-0 border-[#808080] bg-[#f6f6f6]"
      >
        <span className="h-[6px] w-[6px] rounded-full border border-[#888] bg-[#ccc]" />
      </button>
    </aside>
  );
}

function Caster({ x, y }: { x: number; y: number }) {
  return (
    <g transform={`translate(${x} ${y})`} stroke="#111">
      <path d="M-7-16H8L6 0-3 2Z" fill="#7c7184" />
      <ellipse cx="-1.500" rx="8.500" ry="14" fill="#77737f" />
      <ellipse cx="2" rx="8" ry="13.500" fill="#bdbdc8" strokeWidth="1.600" />
      <ellipse cx="2.500" rx="5.500" ry="10.500" fill="#d9d9e2" />
      <path d="M2.500-2v12M-2 5 7-3M-2-5 7 5" strokeWidth="1.300" />
      <path d="M-6-16H7L4 0H1Z" fill="#6e6478" strokeWidth=".8" />
      <ellipse cx="2" rx="2" ry="3" fill="#555" />
    </g>
  );
}

const slats = Array.from({ length: 19 }, (_, i) => i + 1);
const vents = [4, 4, 4, 2, 2, 2, 2].flatMap((count, row) => Array.from({ length: count }, (_, col) => ({ row, col })));

const lamps = [
  { x: 920, y: 652.5, r: 4.5, fill: "#ee6a10" },
  { x: 936, y: 655.5, r: 4.5, fill: "#a39aa3" },
  { x: 951.5, y: 658.5, r: 4.5, fill: "#3f8f50" },
  { x: 911.5, y: 672.5, r: 5.2, fill: "#ff7612" },
  { x: 944.5, y: 679.5, r: 4.5, fill: "#ee6a10" },
];

function ModelView() {
  return (
    <svg viewBox="252 140 1078 833" className="block h-full w-full" role="img" aria-label="静音粉碎机模型">
      <defs>
        <linearGradient id="steel">
          <stop offset="0" stopColor="#5d5552" />
          <stop offset=".3" stopColor="#a69b98" />
          <stop offset=".42" stopColor="#c2b6b1" />
          <stop offset=".62" stopColor="#70686a" />
          <stop offset=".82" stopColor="#8f7790" />
          <stop offset="1" stopColor="#564c55" />
        </linearGradient>
        <linearGradient id="cone">
          <stop offset="0" stopColor="#4b4745" />
          <stop offset=".35" stopColor="#85807d" />
          <stop offset=".6" stopColor="#5a5554" />
          <stop offset=".82" stopColor="#7d6c7b" />
          <stop offset="1" stopColor="#4b454a" />
        </linearGradient>
        <linearGradient id="duct">
          <stop offset="0" stopColor="#55585c" />
          <stop offset=".3" stopColor="#8d9195" />
          <stop offset=".55" stopColor="#6a6d71" />
          <stop offset=".8" stopColor="#74697c" />
          <stop offset="1" stopColor="#56525c" />
        </linearGradient>
        <linearGradient id="pipe">
          <stop offset="0" stopColor="#666a70" />
          <stop offset=".35" stopColor="#c3c8cd" />
          <stop offset=".6" stopColor="#83878d" />
          <stop offset="1" stopColor="#5c5164" />
        </linearGradient>
        <linearGradient id="elbow" x1="0" y1="0" x2="0" y2="1">
          <stop offset="0" stopColor="#a5aaae" />
          <stop offset=".35" stopColor="#dfe5e8" />
          <stop offset="1" stopColor="#777a80" />
        </linearGradient>
        <linearGradient id="inlet" x1="0" y1="0" x2=".15" y2="1">
          <stop offset="0" stopColor="#b9aea8" />
          <stop offset=".45" stopColor="#f0e6df" />
          <stop offset="1" stopColor="#746b69" />
        </linearGradient>
      </defs>

      <g stroke="#111" strokeWidth="1.200" strokeLinejoin="round">
        {/* dust bin duct */}
        <path d="M499 412 501 488Q502 495 530 496 558 495 559 487L558 412Z" fill="url(#duct)" />
        <path d="M498.500 395V410Q505 418 528 418 551 418 557 410V385Z" fill="url(#steel)" />
        <path d="M497.500 408Q504 418.500 528 418.500T558.500 408" fill="none" strokeWidth="1.600" />

        {/* cyclone */}
        <path d="M591.500 522V537Q609 544 627 537V522Z" fill="url(#steel)" />
        <ellipse cx="608.500" cy="518.500" rx="24" ry="7.500" fill="#a79c95" />
        <path d="M568 429 591.500 520Q609 528 626.500 520L643.500 427Z" fill="url(#cone)" stroke="none" />
        <path d="M568 429 591.500 520M626.500 520 643.500 427" />
        <path d="M584.500 519.500Q590 526.500 608.500 527T632.500 519.500" fill="none" strokeWidth="1.600" />
        <path d="M566.700 375V429Q578 438.500 606 438.500T644 428V350H600Z" fill="url(#steel)" />
        <path d="M613 364.500 626 357.500 643 350 641 357Q630 364 613 364.500Z" fill="#fff" />
        <path d="m621 361.500 4 1m2-4 6 1m0-4 5 1" strokeWidth="1.600" />

        {/* fan housing */}
        <path d="m653.500 652 46-23 22 6v30l-16-3Z" fill="#656565" />
        <path d="m621.500 683.500 32-31.500 60 12v103l-90-19Z" fill="#444" strokeWidth="1.600" />
        <path d="m653.500 655 52 10" />

        {/* pipe run */}
        <path d="M696.500 505 700 636Q708 640 719 636L715.500 505Z" fill="url(#pipe)" />
        <path d="M684.500 504a21 7 0 0 0 42 0v3a21 7 0 0 1-42 0Z" fill="#333" />
        <ellipse cx="705.500" cy="503.500" rx="21" ry="6.500" fill="#fff" />
        <path d="M694 440 695.500 504Q705 509 715 504L713.500 440Z" fill="url(#pipe)" />
        <path d="M632 377 667 382.500Q711 396 713.500 440H694Q691 405 662 401L630 394Z" fill="url(#elbow)" />
        <path d="M668 382.500Q661 390 663.500 401M694 440q10 3 19.500 0" fill="none" />

        {/* blower head */}
        <path d="m495 335 91-46 47 10-92 46Z" fill="#fff" />
        <path d="m495 335 46 10-6 57.500-48-8.500Z" fill="#c8bdb6" strokeWidth="1.500" />
        <path d="m541 345 92-46 11 50-109 53.500Z" fill="#7f6f7a" strokeWidth="1.500" />
        <path d="M587 379Q592 371 604 371.500L633 377Q628 385 630.500 394 598 391 587 379Z" fill="url(#inlet)" />

        <Caster x={751} y={798} />
        <Caster x={938} y={836} />
        <Caster x={1071} y={770} />

        {/* cabinet */}
        <path d="m721.500 599 73-37 195 18.500 84 17L970.500 649Z" fill="#50cd9d" strokeWidth="1.400" />
        <path d="m721.500 599 249 50-18 47.500-248-49Z" fill="#49b189" strokeWidth="1.400" />
        <path d="m704.500 647.500 248 49 3.500 110-16 16-213.500-42-18.500-25Z" fill="#367a5d" strokeWidth="1.400" />
        <path d="m970.500 649 103-51.500 37 46.500 2.500 84-157 78-3.500-109.500Z" fill="#2f6a56" strokeWidth="1.400" />
        <path d="m956 806 157-78.500-18 18-155 77Z" fill="#214a3d" strokeWidth="1.400" />
        <path d="M973 654 1072 605 1106.500 648 1108.500 723 999 777.500 997.500 720 958.500 739 956.500 696.500Z" fill="#265247" strokeWidth="1.500" />
        <path d="M778 610.500 760.500 659 763.500 762.500 899 790 896 685.500 913 638Z" fill="none" strokeWidth="1.400" />

        {lamps.map((l) => (
          <g key={`${l.x}`}>
            <circle cx={l.x} cy={l.y} r={l.r} fill={l.fill} strokeWidth="1.500" />
            <circle cx={l.x - 1} cy={l.y - 1} r={1.5} fill="#fff" opacity=".3" stroke="none" />
          </g>
        ))}
        <path d="m887 712-5 5v20l6 4" fill="none" strokeWidth="4" strokeLinecap="round" />
        <path d="m882 718v19" stroke="#777" strokeWidth="1.500" />
        <circle cx="888" cy="749.500" r="2" fill="#dfeee6" strokeWidth=".8" />
        {vents.map(({ row, col }) => {
          const x = 958.5 + col * 9.3 + row * 0.4;
          const y = 746 - col * 4.600 + row * 8.700;
          return <path key={`${row}-${col}`} d={`M${x} ${y}l6-2.500`} strokeWidth="2.200" />;
        })}
        <ellipse cx="986.500" cy="775.500" rx="5" ry="8" fill="#7a2620" />
        <path d="M986 769v13" stroke="#d04a3c" strokeWidth="2" />

        {/* hopper */}
        <path d="M785.500 601.500 795 597.500 985 600 991 603 931.500 631.500Z" fill="#fff" />
        <path d="m912 400.500 94-46.500 5 155.500L981 603 931 628.500 914 470Z" fill="#7d6e7c" strokeWidth="1.400" />
        <path d="m776.500 373.500 94-47L1006 354l-94 46.500Z" fill="#fff" strokeWidth="1.400" />
        <path d="m776.500 373.500 135.500 27 1 70-27 13-107-24Z" fill="#c8c8c8" strokeWidth="1.400" />
        <path d="M783 383 905 407.500 907 467 883 479 785 458.500Z" fill="#5a9463" />
        <path d="m783 383 122 24.500v7L783.500 390.500Z" fill="#555" />
        {slats.map((i) => {
          const x = 783.5 + i * 6.1;
          const top = 390.5 + i * 1.2;
          return <path key={i} d={`M${x} ${top}q.5 30 2 ${i > 17 ? 56 : 68}`} fill="none" strokeWidth="1.500" />;
        })}
        <path d="M792.500 485 927.500 511.500 931 628.500 795.500 601.500Z" fill="#c5c5c5" strokeWidth="1.400" />
        <path d="M784 475 792.500 485 927.500 511.500 914 496.500 868 489Z" fill="#555" />
        <path d="m876 491 38-3v9Z" fill="#ddd" />
        <path d="m730.500 456.500 46-21L779 459l-24 2Z" fill="#7d6e7c" strokeWidth="1.400" />
        <path d="m752 460.500 35-2 92 19.500-11.500 6Z" fill="#fff" />
        <path d="m786 458.500 95 19.500" strokeWidth="2.200" />
        <path d="m730.500 457 137 27v7.500l-137-27.500Z" fill="#d2d2d2" strokeWidth="1.400" />
        <path d="m867.500 484 54.500-26.500 1 6-9 24.500-46.500 3.500Z" fill="#7d6e7c" strokeWidth="1.400" />
        <path d="m836 487-1 5 8 8.500 18.500 2 5.500-6-1-5" fill="#555" strokeWidth="3.600" />
        <path d="m837 492 7 7 16.500 2 4.500-5" fill="none" stroke="#777" strokeWidth=".8" />
        <path d="m849 617 8-4.500h11l-5 5-9 3Z" fill="#eee" />
        <path d="m854 617 5-2" strokeWidth="2" />
      </g>

      {/* axis triad */}
      <g strokeWidth="4">
        <path d="m292 915-9 4" stroke="#1c1c8f" />
        <path d="M292 915V894" stroke="#217a21" />
        <path d="m292 915 17 3" stroke="#b81f1f" />
        <circle cx="280" cy="920.500" r="4.500" fill="#1b1bd0" />
        <path d="m291.500 886 4.500 11h-9Z" fill="#2f9a3a" />
        <path d="m317 920-9-5-1 8Z" fill="#d23030" />
      </g>
      <g fontSize="11" className="font-['Liberation_Serif',serif]" textAnchor="middle">
        <text x="289.500" y="885" fill="#217a21">Y</text>
        <text x="318.500" y="924" fill="#d02020">X</text>
        <text x="271" y="929" fill="#2020c0">Z</text>
      </g>
    </svg>
  );
}

const playback = ["M2 2v10M11 2 4 7l7 5Z", "m9 2-5 5 5 5Z", "m4 2 5 5-5 5Z", "M11 2v10M2 2l7 5-7 5Z"];

function BottomTabs() {
  return (
    <footer className="flex h-[14px] shrink-0 overflow-hidden bg-[#f6f6f6] pl-[17px]">
      <div className="flex shrink-0 border-r border-[#808080] bg-[#b4b4b4] text-[#8c8c8c]">
        {playback.map((d) => (
          <button key={d} aria-label="切换标签" className="w-[17px] border-l border-[#8c8c8c] first:w-4 last:w-4">
            <svg viewBox="0 0 13 14" className="mx-auto block h-[14px] w-[13px]" aria-hidden="true">
              <path d={d} fill="currentColor" stroke="currentColor" />
            </svg>
          </button>
        ))}
      </div>
      <div className="flex flex-1 items-start text-[13px] leading-[11px] text-black">
        <button className="h-full w-12 shrink-0 border-r border-[#808080] pb-[2px] pl-1">模型</button>
        <button className="h-full w-[59px] shrink-0 border-t border-r border-[#808080] bg-[#d2d2d2] pb-[2px]">
          <Mixed text="3D" /> 视图
        </button>
        <button className="h-full w-[84px] shrink-0 border-t border-r border-[#808080] bg-[#d2d2d2] pr-2 pb-[2px]">运动算例 1</button>
        <div className="flex-1 border-t border-[#808080]" />
      </div>
    </footer>
  );
}

export default function App() {
  return (
    <div className="flex h-screen flex-col overflow-hidden bg-[#f6f6f6] font-['Noto_Sans_CJK_SC',sans-serif]">
      <TitleBar />
      <Ribbon />
      <main className="relative flex min-h-0 flex-1 flex-col border-t border-[#808080] bg-[radial-gradient(ellipse_88%_62%_at_25%_0%,#ffffff_0%,#ffffff_45%,#ffffff00_100%),linear-gradient(to_bottom,#f4f5fa_0%,#e6e8f2_22%,#dfe2ee_40%,#dcdfea_51%,#e8eaf2_58%,#f8f8fb_66%,#ffffff_71%,#ffffff_84%,#f0f2f5_100%)]">
        <CommandTabs />
        <div className="flex min-h-0 flex-1">
          <SideStrip />
          <FeaturePanel />
          <div className="min-w-0 flex-1">
            <ModelView />
          </div>
        </div>
        <HeadsUpBar />
      </main>
      <BottomTabs />
    </div>
  );
}
